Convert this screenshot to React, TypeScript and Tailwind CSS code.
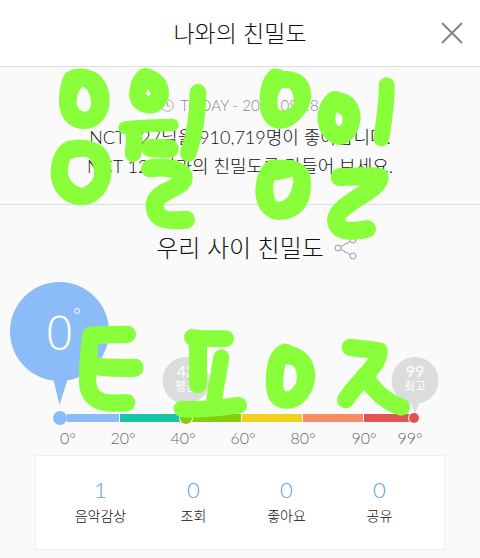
import React from "react";

const scaleParts = [
  { color: "bg-[#8bbcf8]", width: "w-[52px]" },
  { color: "bg-[#17c4a8]", width: "w-[60px]" },
  { color: "bg-[#86cd0c]", width: "w-[60px]" },
  { color: "bg-[#efd11b]", width: "w-[60px]" },
  { color: "bg-[#fa8c61]", width: "w-[60px]" },
  { color: "bg-[#e25356]", width: "w-[48px]" },
];

const degrees = [
  { value: "0", place: "left-[68px]" },
  { value: "20", place: "left-[123px]" },
  { value: "40", place: "left-[183px]" },
  { value: "60", place: "left-[243px]" },
  { value: "80", place: "left-[303px]" },
  { value: "90", place: "left-[364px]" },
  { value: "99", place: "left-[410px]" },
];

const stats = [
  { count: 1, label: "음악감상" },
  { count: 0, label: "조회" },
  { count: 0, label: "좋아요" },
  { count: 0, label: "공유" },
];

function SmallBubble({ value, label, place }: { value: string; label: string; place: string }) {
  return (
    <div className={`absolute top-[75px] flex h-[47px] w-[47px] -translate-x-1/2 flex-col items-center pt-1.5 font-normal text-white ${place}`}>
      <svg className="absolute left-0 top-0" width="47" height="58" viewBox="0 0 47 58" fill="#dcdcdc" aria-hidden="true">
        <circle cx="23.5" cy="23.5" r="23.5" />
        <path d="M19 45h9l-4.500 12z" />
      </svg>
      <span className="relative text-base leading-4">{value}</span>
      <span className="relative text-xs leading-4">{label}</span>
    </div>
  );
}

function Doodle() {
  return (
    <svg
      className="pointer-events-none absolute left-1/2 top-0 -translate-x-1/2"
      width="480"
      height="558"
      viewBox="0 0 480 558"
      fill="none"
      aria-hidden="true"
    >
      <g transform="translate(30 60) scale(.33333)" fill="#88ff3a" fillRule="evenodd">
        <path d="M105 40C130 20 175 20 205 42C232 65 240 95 239 127C235 172 207 207 163 207C115 207 87 170 87 122C88 90 92 65 105 40ZM158 80C145 90 139 112 140 132C145 150 160 160 174 152C185 145 185 125 180 107C174 92 166 80 158 80Z" />
        <path d="M325 32C340 18 360 24 374 33C402 46 417 70 417 101C414 137 390 160 359 161C323 160 300 137 297 106C298 75 307 51 325 32ZM353 87L347 102L356 109L363 100Z" />
        <path d="M107 245C142 235 188 239 213 256C240 274 247 305 244 343C239 395 204 435 155 436C102 435 65 397 62 343C62 300 76 260 107 245ZM123 297C112 315 111 338 118 354C127 370 144 383 157 383C173 377 188 365 192 345C194 320 185 298 170 291C152 288 133 293 123 297Z" />
      </g>
      <g transform="translate(30 60) scale(.33333)" stroke="#88ff3a" strokeLinecap="round" strokeLinejoin="round">
        <path strokeWidth="38" d="M284 203C325 198 380 197 427 195" />
        <path strokeWidth="50" d="M312 210C314 240 311 265 309 281" />
        <path strokeWidth="56" d="M362 264L418 266" />
        <path strokeWidth="50" d="M504 97C504 160 495 220 475 280" />
        <path strokeWidth="54" d="M360 325C400 318 460 325 461 354C460 388 373 390 374 437C376 487 425 483 468 479" />
      </g>
      <g transform="translate(220 60) scale(.33333)" fill="#88ff3a" fillRule="evenodd">
        <path d="M150 31C162 22 178 25 190 33C230 32 257 46 268 75C280 112 271 143 249 167C230 190 207 208 174 206C138 202 121 170 119 133C117 91 127 52 150 31ZM187 84C173 97 169 121 175 147C188 158 207 151 218 136C226 118 219 94 207 85Z" />
        <path d="M323 102C338 88 354 93 365 99C402 103 422 137 422 174C417 221 395 252 359 255C318 250 292 216 292 167C296 136 307 117 323 102ZM351 156C343 170 345 190 355 198C366 199 370 182 366 167Z" />
        <path d="M145 302C160 294 172 304 185 300C227 297 258 310 269 341C276 370 274 405 261 433C242 467 211 480 172 480C133 475 107 442 106 394C107 351 119 320 145 302ZM165 361C156 376 159 405 168 423C183 431 204 416 212 396C219 378 222 360 218 351C201 354 180 361 165 361Z" />
      </g>
      <g transform="translate(220 60) scale(.33333)" stroke="#88ff3a" strokeLinecap="round" strokeLinejoin="round">
        <path strokeWidth="48" d="M500 76C502 125 492 180 484 235" />
        <path strokeWidth="54" d="M359 351C410 350 455 345 479 351C482 392 350 430 348 480C350 522 405 514 441 507" />
      </g>
      <g transform="translate(0 230) scale(.33333)" stroke="#88ff3a" strokeLinecap="round" strokeLinejoin="round">
        <path strokeWidth="52" d="M382 313C340 314 300 314 272 317C266 370 260 430 264 468C275 524 330 522 380 518" />
        <path strokeWidth="54" d="M404 413C360 415 315 414 275 407" />
        <path strokeWidth="50" d="M577 322C610 328 648 325 677 326" />
        <path strokeWidth="54" d="M594 330C594 375 594 425 594 463" />
        <path strokeWidth="48" d="M664 382C656 435 645 480 642 518" />
        <path strokeWidth="50" d="M546 537C603 542 660 532 716 526" />
      </g>
      <g transform="translate(240 230) scale(.33333)">
        <path fill="#88ff3a" fillRule="evenodd" d="M119 346C133 336 146 342 157 349C196 358 222 388 226 430C226 474 207 507 179 526C149 545 104 538 87 507C73 475 76 422 86 389C93 368 105 353 119 346ZM137 403C130 428 128 459 132 480C144 492 161 475 169 457C174 434 168 407 151 404Z" />
        <path stroke="#88ff3a" strokeWidth="52" strokeLinecap="round" strokeLinejoin="round" d="M331 352C362 358 390 357 417 363C419 407 356 449 317 509M373 438C405 486 440 518 484 531" />
      </g>
    </svg>
  );
}

export default function App() {
  return (
    <main className="relative min-h-screen overflow-hidden bg-[#fafafa] font-['Lato','Noto_Sans_CJK_KR',sans-serif] font-light text-[#111111]">
      <header className="grid h-[67px] grid-cols-[1fr_auto_1fr] items-center border-b border-[#dedede] bg-white px-4">
        <h1 className="col-start-2 text-[23px] leading-8 font-light">나와의 친밀도</h1>
        <button aria-label="닫기" className="justify-self-end">
          <svg width="24" height="24" viewBox="0 0 24 24" stroke="#858585" strokeWidth="2" fill="none">
            <path d="M2 2l20 20M22 2L2 22" />
          </svg>
        </button>
      </header>

      <section className="flex h-[138px] flex-col items-center border-b border-[#dedede] pt-7">
        <p className="flex items-center gap-1.5 text-[15px] leading-5 text-[#888888]">
          <svg width="13" height="13" viewBox="0 0 13 13" fill="none" stroke="#a8a8a8" aria-hidden="true">
            <circle cx="6.500" cy="6.500" r="5.800" />
            <path d="M6.500 3v4h3" />
          </svg>
          TODAY - 2018.09.18
        </p>
        <p className="mt-2 text-center text-lg leading-[29px]">
          NCT 127님을 910,719명이 좋아합니다.
          <br />
          NCT 127님과의 친밀도를 만들어 보세요.
        </p>
      </section>

      <section>
        <div className="grid h-[77px] grid-cols-[1fr_auto_1fr] items-center gap-2.5 pb-2 pt-4">
          <h2 className="col-start-2 text-2xl leading-8 font-light">우리 사이 친밀도</h2>
          <button aria-label="공유하기" className="justify-self-start">
            <svg width="24" height="24" viewBox="0 0 24 24" stroke="#999999" fill="none">
              <circle cx="4" cy="12" r="3" />
              <circle cx="19" cy="4" r="3" />
              <circle cx="19" cy="20" r="3" />
              <path d="M6.700 10.600l9.600-5.200M6.700 13.400l9.600 5.200" />
            </svg>
          </button>
        </div>

        <div className="relative mx-auto h-[173px] w-[480px]">
          <div className="absolute left-[10px] top-0 flex h-[99px] w-[99px] items-center justify-center text-white">
            <svg className="absolute left-0 top-0" width="99" height="125" viewBox="0 0 99 125" fill="#8bbcf8" aria-hidden="true">
              <circle cx="49.500" cy="49.500" r="49.500" />
              <path d="M43 96h15l-8.500 27z" />
            </svg>
            <span className="relative font-['Open_Sans',sans-serif] text-5xl leading-none">0</span>
            <span className="absolute left-[64px] top-[26px] h-[6px] w-[6px] rounded-full border border-white" />
          </div>
          <SmallBubble value="42" label="평균" place="left-[186px]" />
          <SmallBubble value="99" label="최고" place="left-[415px]" />

          <div className="flex gap-px pl-[67px] pt-[132px]">
            {scaleParts.map((part) => (
              <span key={part.color} className={`h-2 ${part.color} ${part.width}`} />
            ))}
          </div>
          <span className="absolute left-[53px] top-[129px] size-[14px] rounded-full bg-[#8bbcf8]" />
          <span className="absolute left-[180px] top-[130px] size-3 rounded-full bg-[#86cd0c] ring-1 ring-[#fafafa]" />
          <span className="absolute left-[409px] top-[131px] size-[10px] rounded-full bg-[#e25356] ring-1 ring-[#fafafa]" />
          {degrees.map((degree) => (
            <span key={degree.value} className={`absolute top-[146px] -translate-x-1/2 text-base leading-5 text-[#666666] ${degree.place}`}>
              {degree.value}°
            </span>
          ))}
        </div>

        <dl className="mx-[35px] grid h-[95px] grid-cols-4 border border-[#eeeeee] bg-white px-[18px] pt-5">
          {stats.map((stat) => (
            <div key={stat.label} className="flex flex-col-reverse items-center justify-end">
              <dt className="pt-0.5 text-sm leading-5">{stat.label}</dt>
              <dd className="text-[22px] leading-7 text-[#5f9fe0]">{stat.count}</dd>
            </div>
          ))}
        </dl>
      </section>
      <Doodle />
    </main>
  );
}
